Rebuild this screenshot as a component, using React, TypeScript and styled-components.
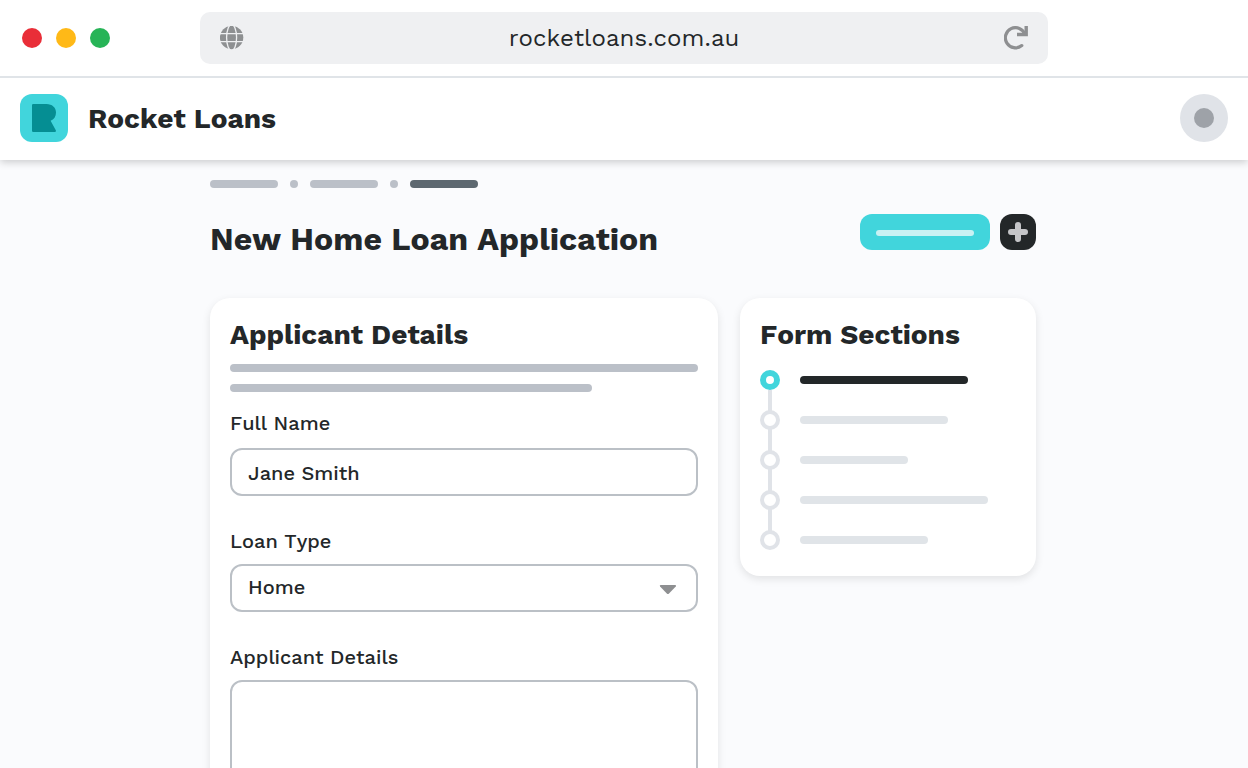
import React from "react";
import styled, { createGlobalStyle } from "styled-components";

const GlobalStyle = createGlobalStyle`
  *, *::before, *::after { box-sizing: border-box; }
  html, body { margin: 0; height: 768px; overflow: hidden; }
  body {
    background: #fafbfd;
    color: #232729;
    font-family: "Work Sans", Inter, "Liberation Sans", sans-serif;
    font-kerning: none;
  }
  h1, h2, p { margin: 0; }
`;

const Page = styled.div`
  height: 768px;
  overflow: hidden;
  display: flex;
  flex-direction: column;
`;

const BrowserBar = styled.div`
  position: relative;
  z-index: 1;
  flex: none;
  height: 78px;
  display: grid;
  grid-template-columns: 200px 848px;
  align-items: center;
  background: #fff;
  border-bottom: 2px solid #e0e4e8;
`;

const Lights = styled.div`
  display: flex;
  gap: 14px;
  padding-left: 22px;
`;

const Light = styled.span<{ $color: string }>`
  width: 20px;
  height: 20px;
  border-radius: 50%;
  background: ${(p) => p.$color};
`;

const AddressBar = styled.div`
  height: 52px;
  padding: 0 20px;
  display: flex;
  align-items: center;
  justify-content: space-between;
  border-radius: 10px;
  background: #eff0f2;
`;

const Address = styled.span`
  font-size: 24px;
  line-height: 52px;
  letter-spacing: 0.05px;
`;

const Header = styled.header`
  flex: none;
  height: 82px;
  padding: 0 20px 2px;
  display: flex;
  align-items: center;
  gap: 20px;
  background: #fff;
  box-shadow: 0 2px 8px rgba(0, 0, 0, 0.2);
`;

const Brand = styled.span`
  flex: 1;
  padding-top: 2px;
  font-size: 28px;
  font-weight: 700;
  line-height: 32px;
`;

const Avatar = styled.div`
  width: 48px;
  height: 48px;
  display: grid;
  place-items: center;
  border-radius: 50%;
  background: #e0e3e8;

  &::after {
    content: "";
    width: 20px;
    height: 20px;
    border-radius: 50%;
    background: #9ea2a8;
  }
`;

const Main = styled.main`
  width: 826px;
  margin-left: 210px;
  padding-top: 20px;
`;

const Line = styled.span<{ $width: number; $color?: string; $height?: number }>`
  display: block;
  width: ${(p) => p.$width}px;
  height: ${(p) => p.$height ?? 8}px;
  border-radius: 4px;
  background: ${(p) => p.$color ?? "#bbc0c8"};
`;

const Breadcrumb = styled.nav`
  display: flex;
  gap: 12px;
`;

const TitleRow = styled.div`
  height: 84px;
  margin-top: 26px;
  display: flex;
  justify-content: space-between;
`;

const Title = styled.h1`
  padding-top: 5px;
  font-size: 32px;
  font-weight: 700;
  line-height: 40px;
  letter-spacing: 0.03px;
  white-space: nowrap;
`;

const Actions = styled.div`
  display: flex;
  gap: 10px;
`;

const PrimaryButton = styled.div`
  width: 130px;
  height: 36px;
  padding: 16px 16px 0;
  border-radius: 12px;
  background: #41d5dc;
`;

const AddButton = styled.div`
  width: 36px;
  height: 36px;
  display: grid;
  place-items: center;
  border-radius: 12px;
  background: #232729;
`;

const Columns = styled.div`
  display: grid;
  grid-template-columns: 508px 296px;
  gap: 22px;
  align-items: start;
`;

const Card = styled.section<{ $height: number }>`
  height: ${(p) => p.$height}px;
  padding: 20px;
  border-radius: 20px;
  background: #fff;
  box-shadow: 0 3px 8px rgba(0, 0, 0, 0.1);
`;

const CardTitle = styled.h2`
  font-size: 28px;
  font-weight: 700;
  line-height: 34px;
  white-space: nowrap;
`;

const Summary = styled.div`
  margin-top: 12px;
  display: grid;
  gap: 12px;
`;

const Field = styled.div<{ $top: number; $gap: number }>`
  margin-top: ${(p) => p.$top}px;
  display: grid;
  gap: ${(p) => p.$gap}px;
`;

const Label = styled.span`
  font-size: 20px;
  font-weight: 500;
  line-height: 24px;
`;

const Control = styled.div<{ $height?: number }>`
  height: ${(p) => p.$height ?? 48}px;
  padding: 0 19px 0 16px;
  display: flex;
  align-items: center;
  justify-content: space-between;
  border: 2px solid #bbc0c6;
  border-radius: 12px;
`;

const Value = styled(Label)<{ $drop?: number; $lift?: number }>`
  padding-top: ${(p) => p.$drop ?? 0}px;
  padding-bottom: ${(p) => p.$lift ?? 0}px;
`;

const Steps = styled.div`
  margin-top: 18px;
  display: grid;
  gap: 20px;
`;

const Step = styled.div`
  height: 20px;
  display: flex;
  align-items: center;
  gap: 20px;
`;

const Marker = styled.span<{ $active: boolean; $last: boolean }>`
  position: relative;
  width: 20px;
  height: 20px;
  border: ${(p) => (p.$active ? "6px solid #41d5dc" : "4px solid #e0e3e8")};
  border-radius: 50%;

  &::after {
    content: "";
    display: ${(p) => (p.$last ? "none" : "block")};
    position: absolute;
    top: ${(p) => (p.$active ? 14 : 15)}px;
    left: ${(p) => (p.$active ? 2 : 4)}px;
    width: 4px;
    height: 22px;
    background: #e0e3e8;
  }
`;

const GlobeIcon = () => (
  <svg width="24" height="24" viewBox="0 0 24 24" fill="none">
    <circle cx="11.6" cy="11.6" r="11.7" fill="#8e9092" />
    <g stroke="#eff0f2" strokeWidth="1.3">
      <ellipse cx="11.6" cy="11.6" rx="5" ry="13" />
      <path d="M-1 7.6H25M-1 15.6H25" />
    </g>
  </svg>
);

const ReloadIcon = () => (
  <svg width="24" height="24" viewBox="0 0 24 24" fill="none" stroke="#8e8f91">
    <path d="M17.8 19.6A10.1 10.1 0 1 1 21 8.4" strokeWidth="3.2" strokeLinecap="round" />
    <path d="M22.2 0V8.5H13" strokeWidth="3.4" />
  </svg>
);

const Logo = () => (
  <svg width="48" height="48" viewBox="0 0 48 48">
    <rect width="48" height="48" rx="12" fill="#41d5dc" />
    <path
      d="M13.2 10H26.5C32 10 36 13.5 36 18.5C36 22.5 34 25.5 30.6 26.8L35.8 36.3C36.3 37.2 35.8 38 34.8 38H13.2Q12 38 12 36.8V11.2Q12 10 13.2 10Z"
      fill="#058e93"
    />
  </svg>
);

const PlusIcon = () => (
  <svg width="20" height="20" viewBox="0 0 20 20" stroke="#c4c5c8" strokeWidth="6" strokeLinecap="round">
    <path d="M10 3V17M3 10H17" />
  </svg>
);

const Caret = () => (
  <svg width="18" height="10" viewBox="0 0 18 10">
    <path d="M1.6 0H16.2Q17.6.2 16.8 1.4L10 8.6Q8.9 9.6 7.8 8.6L1.1 1.4Q.2.2 1.6 0Z" fill="#8e8f91" />
  </svg>
);

const CaretSlot = styled.span`
  display: flex;
  padding-top: 3px;
`;

const steps = [168, 148, 108, 188, 128];

export default function App() {
  return (
    <Page>
      <GlobalStyle />
      <BrowserBar>
        <Lights>
          <Light $color="#e92e38" />
          <Light $color="#ffb917" />
          <Light $color="#27b457" />
        </Lights>
        <AddressBar>
          <GlobeIcon />
          <Address>rocketloans.com.au</Address>
          <ReloadIcon />
        </AddressBar>
      </BrowserBar>
      <Header>
        <Logo />
        <Brand>Rocket Loans</Brand>
        <Avatar />
      </Header>
      <Main>
        <Breadcrumb>
          <Line $width={68} />
          <Line $width={8} />
          <Line $width={68} />
          <Line $width={8} />
          <Line $width={68} $color="#5d6870" />
        </Breadcrumb>
        <TitleRow>
          <Title>New Home Loan Application</Title>
          <Actions>
            <PrimaryButton>
              <Line $width={98} $height={6} $color="#c9f1f3" />
            </PrimaryButton>
            <AddButton>
              <PlusIcon />
            </AddButton>
          </Actions>
        </TitleRow>
        <Columns>
          <Card $height={540}>
            <CardTitle>Applicant Details</CardTitle>
            <Summary>
              <Line $width={468} />
              <Line $width={362} />
            </Summary>
            <Field $top={19} $gap={13}>
              <Label>Full Name</Label>
              <Control>
                <Value $drop={2}>Jane Smith</Value>
              </Control>
            </Field>
            <Field $top={33} $gap={11}>
              <Label>Loan Type</Label>
              <Control>
                <Value $lift={2}>Home</Value>
                <CaretSlot>
                  <Caret />
                </CaretSlot>
              </Control>
            </Field>
            <Field $top={33} $gap={11}>
              <Label>Applicant Details</Label>
              <Control $height={140} />
            </Field>
          </Card>
          <Card $height={278}>
            <CardTitle>Form Sections</CardTitle>
            <Steps>
              {steps.map((width, i) => (
                <Step key={i}>
                  <Marker $active={i === 0} $last={i === steps.length - 1} />
                  <Line $width={width} $color={i === 0 ? "#232729" : "#e0e4e8"} />
                </Step>
              ))}
            </Steps>
          </Card>
        </Columns>
      </Main>
    </Page>
  );
}
